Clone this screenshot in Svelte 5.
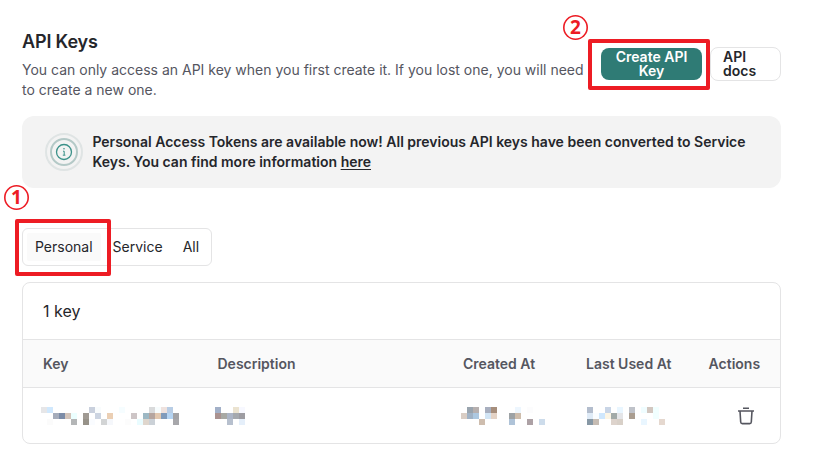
<script>
  const tabs = ['Personal', 'Service', 'All'];

  // Redacted values: [column, row, colour] on a 6px grid.
  const masks = {
    key: { cols: 23, cells: [
      [0,0,'#e6e6e8'],[1,0,'#d0e8fd'],[8,0,'#c9d0dd'],[9,0,'#f9fcfd'],[13,0,'#f6fdff'],[18,0,'#d9dadb'],[19,0,'#f7fcfd'],[20,0,'#efe2de'],[21,0,'#b8cde5'],
      [2,1,'#a5acbb'],[3,1,'#7c8ca7'],[4,1,'#d3c4ba'],[5,1,'#ecffff'],[7,1,'#a09a93'],[9,1,'#ccd4e1'],[11,1,'#ebcfb4'],[15,1,'#cdc5c6'],[17,1,'#9db8c4'],[18,1,'#b5a59f'],[19,1,'#e2c8b0'],[20,1,'#809bbb'],[21,1,'#b5d4f2'],[22,1,'#a3a3a6'],
      [1,2,'#fbfbfb'],[5,2,'#b4b6b7'],[7,2,'#979289'],[8,2,'#fafcff'],[10,2,'#d2d4d5'],[11,2,'#f5f7fb'],[14,2,'#fcfcfc'],[16,2,'#e9fcff'],[17,2,'#dfd6cd'],[18,2,'#cbd1d7'],[22,2,'#a7a7ab']
    ] },
    description: { cols: 5, cells: [
      [0,0,'#a2b0c8'],[3,0,'#ebe3d0'],[4,0,'#f7f8ff'],
      [0,1,'#aa9290'],[1,1,'#a8a9a4'],[2,1,'#acb5c6'],[3,1,'#a5a9ae'],[4,1,'#9d9ca2'],
      [2,2,'#b7c0ce'],[4,2,'#e5effa']
    ] },
    created: { cols: 14, cells: [
      [1,0,'#99a4ae'],[2,0,'#b7b0af'],[4,0,'#a8afbf'],[5,0,'#a68e7c'],[9,0,'#edf6fe'],[11,0,'#fcfcfd'],
      [0,1,'#d9cdc4'],[1,1,'#a0b2c5'],[2,1,'#adc8e0'],[4,1,'#d2e5f5'],[5,1,'#e4d3c6'],[8,1,'#9da2a5'],[9,1,'#cebdac'],
      [3,2,'#cebdae'],[8,2,'#afc3d8'],[11,2,'#ada1a5'],[13,2,'#cddceb']
    ] },
    used: { cols: 13, cells: [
      [0,0,'#b3bdcd'],[3,0,'#c9d5e6'],[5,0,'#e9f6ff'],[7,0,'#bfc2c9'],[9,0,'#f0fdff'],[10,0,'#d2c7c0'],[11,0,'#f1ffff'],
      [0,1,'#dfebf7'],[1,1,'#fafdff'],[2,1,'#cfe7fd'],[3,1,'#fcf5e5'],[4,1,'#a2aaa8'],[5,1,'#e4e5e8'],[7,1,'#aa9d90'],[11,1,'#f1ffff'],
      [0,2,'#8798a5'],[1,2,'#c6bcb3'],[4,2,'#ddd3cc'],[5,2,'#d8d0c8'],[9,2,'#e9f6ff'],[12,2,'#e5d8cf']
    ] }
  };
</script>

{#snippet mask(m)}
  <svg class="mask" width={m.cols * 6} height="18" shape-rendering="crispEdges" aria-hidden="true">
    {#each m.cells as [x, y, fill]}
      <rect x={x * 6} y={y * 6} width="6" height="6" {fill} />
    {/each}
  </svg>
{/snippet}

<main>
  <header>
    <div class="intro">
      <h1>API Keys</h1>
      <p>You can only access an API key when you first create it. If you lost one, you will need to create a new one.</p>
    </div>
    <div class="actions">
      <button class="create">Create API Key</button>
      <button class="docs">API docs</button>
    </div>
  </header>

  <section class="banner">
    <svg width="38" height="38" viewBox="0 0 38 38" fill="none">
      <circle cx="19" cy="19" r="18" stroke="#dfe4e4" stroke-width="2" />
      <circle cx="19" cy="19" r="13" stroke="#b4c9c7" stroke-width="2" />
      <circle cx="19" cy="19" r="7.5" stroke="#3b9189" stroke-width="1.3" />
      <path d="M18 18.2H19.2V22M17.8 22.2H20.4" stroke="#3b9189" stroke-width="1" />
      <circle cx="19" cy="15.8" r=".8" fill="#3b9189" />
    </svg>
    <p>Personal Access Tokens are available now! All previous API keys have been converted to Service Keys. You can find more information <a href="#here">here</a></p>
  </section>

  <nav>
    {#each tabs as tab, i}
      <button class:active={i === 0}>{tab}</button>
    {/each}
  </nav>

  <section class="card">
    <div class="count">1 key</div>
    <div class="row head">
      <span>Key</span><span>Description</span><span>Created At</span><span>Last Used At</span><span>Actions</span>
    </div>
    <div class="row data">
      <span class="m-key">{@render mask(masks.key)}</span>
      <span class="m-desc">{@render mask(masks.description)}</span>
      <span class="m-created">{@render mask(masks.created)}</span>
      <span class="m-used">{@render mask(masks.used)}</span>
      <span class="trash">
        <svg width="18" height="19" viewBox="0 0 18 19" fill="none" stroke="#55565f" stroke-width="1.6">
          <path d="M6 2.3H12M1 5H17M3 5L3.7 16Q3.8 17.6 5.3 17.6H12.7Q14.2 17.6 14.3 16L15 5" />
        </svg>
      </span>
    </div>
  </section>

  <div class="mark mark-one"></div>
  <div class="mark mark-two"></div>
  <div class="num num-one">1</div>
  <div class="num num-two">2</div>
</main>

<style>
  :global(body) { background: #fff; }
  main {
    position: relative;
    box-sizing: border-box;
    width: 813px;
    height: 465px;
    padding: 30px 32px 0 22px;
    overflow: hidden;
    font-family: Inter, "Liberation Sans", sans-serif;
    font-size: 14px;
    line-height: 20px;
    color: #25262b;
  }
  h1, p { margin: 0; }
  button { font: inherit; color: inherit; margin: 0; border: 0; background: none; }
  header { display: flex; height: 86px; }
  .intro { width: 579px; flex: none; }
  h1 { font-size: 18px; line-height: 24px; font-weight: 600; letter-spacing: -0.15px; margin-bottom: 6px; }
  .intro p { color: #55565f; width: 566px; }
  .actions { display: flex; align-items: center; gap: 8px; flex: 1; height: 34px; margin-top: 17px; }
  .actions button { box-sizing: border-box; font-weight: 600; line-height: 14px; }
  .create { width: 101px; height: 32px; padding: 2px 12px; border-radius: 8px; background: #2f7b75; color: #fff; text-align: center; }
  .docs { width: 71px; height: 34px; padding: 2px 12px; border: 1px solid #e4e4e5; border-radius: 8px; text-align: left; }
  .banner { display: flex; align-items: center; gap: 9.4px; box-sizing: border-box; height: 72px; padding: 0 22px 0 23px; border-radius: 12px; background: #f3f3f3; }
  .banner svg { flex: none; }
  .banner p { font-weight: 600; }
  .banner a { color: inherit; text-underline-offset: 2px; }
  nav { display: flex; box-sizing: border-box; width: 190px; height: 38px; margin-top: 40px; padding: 4px; border: 1px solid #e4e4e5; border-radius: 6px; }
  nav button { padding: 0 8px; margin-right: 4px; white-space: nowrap; }
  nav .active { background: #fafafa; border-radius: 2px; }
  .card { box-sizing: border-box; height: 162px; margin-top: 16px; border: 1px solid #e4e4e5; border-radius: 8px; overflow: hidden; }
  .count { height: 56px; line-height: 57px; padding-left: 20px; font-size: 16px; }
  .row { display: grid; grid-template-columns: 174.5px 245.5px 123px 122.6px 1fr; padding-left: 20px; align-items: center; }
  .head { box-sizing: border-box; height: 49px; background: #fafafa; border: solid #e4e4e5; border-width: 1px 0; color: #55565f; font-weight: 600; }
  .data { height: 55px; }
  .mask { display: block; }
  .m-key { margin-left: -2px; }
  .m-desc { margin-left: -2.5px; }
  .m-created { margin-left: -2px; }
  .m-used { margin-left: 1px; }
  .trash { padding-left: 28.4px; }
  .trash svg { display: block; }
  .mark { position: absolute; box-sizing: border-box; border: 4px solid #ed1c24; border-radius: 2px; }
  .mark-one { left: 15px; top: 219px; width: 96px; height: 57px; }
  .mark-two { left: 588px; top: 39px; width: 122px; height: 51px; }
  .num { position: absolute; box-sizing: border-box; width: 25px; height: 25px; color: #ed1c24; box-shadow: inset 0 0 0 1.6px #ed1c24; border-radius: 50%; font: bold 19px/24px "Noto Sans", sans-serif; text-align: center; }
  .num-one { left: 4px; top: 185px; }
  .num-two { left: 563px; top: 15px; }
</style>
